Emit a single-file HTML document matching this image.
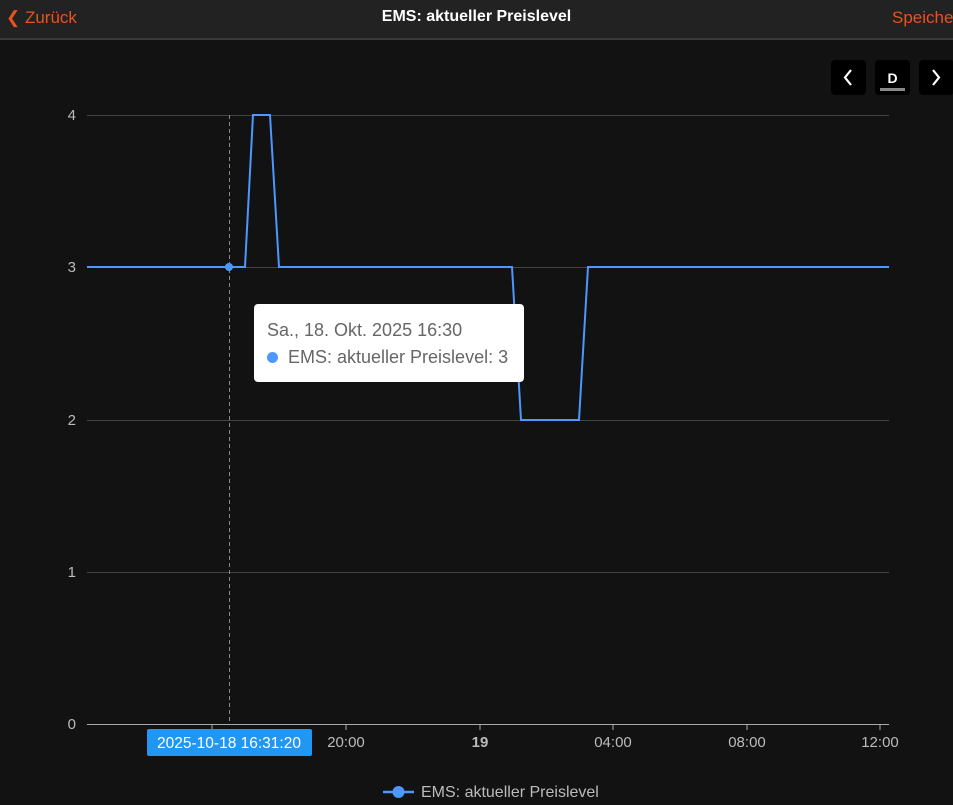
<!DOCTYPE html>
<html><head><meta charset="utf-8"><style>
body{margin:0;width:953px;height:805px;background:#121212;font-family:"Liberation Sans",sans-serif;overflow:hidden;position:relative}
.hdr{position:absolute;left:0;top:0;width:953px;height:38px;background:#222;border-bottom:2px solid #3a3a3a}
.hdr .b{position:absolute;top:8px;color:#e8521e;font-size:17px}
.hdr .t{position:absolute;top:8px;left:0;width:953px;text-align:center;color:#fff;font-size:16px;font-weight:bold}
.btn{position:absolute;top:60px;width:35px;height:35px;background:#000;border-radius:4px;color:#fff;text-align:center}
.tip{position:absolute;left:254px;top:304px;width:270px;height:78px;background:#fff;border-radius:4px;font-size:18px;color:#666}
</style></head><body>
<div class="hdr"><span class="b" style="left:6px">&#10094; Zurück</span><div class="t">EMS: aktueller Preislevel</div><span class="b" style="left:892px">Speiche</span></div>
<div class="btn" style="left:831px"><svg width="35" height="35"><path d="M20 10 L14 17.5 L20 25" stroke="#fff" stroke-width="2.2" fill="none"/></svg></div>
<div class="btn" style="left:875px;font-weight:bold;font-size:14px;line-height:36px">D<div style="position:absolute;left:5px;top:28px;width:25px;height:3px;background:#888"></div></div>
<div class="btn" style="left:919px"><svg width="35" height="35"><path d="M14 10 L20 17.5 L14 25" stroke="#fff" stroke-width="2.2" fill="none"/></svg></div>
<svg width="953" height="805" style="position:absolute;left:0;top:0" font-family="Liberation Sans" font-size="15">
<g stroke="#444" stroke-width="1"><line x1="87" x2="889" y1="115.5" y2="115.5"/><line x1="87" x2="889" y1="267.5" y2="267.5"/><line x1="87" x2="889" y1="420.5" y2="420.5"/><line x1="87" x2="889" y1="572.5" y2="572.5"/></g>
<line x1="87" x2="889" y1="724.5" y2="724.5" stroke="#aaa"/>
<g stroke="#aaa"><line x1="212" x2="212" y1="724" y2="730"/><line x1="346" x2="346" y1="724" y2="730"/><line x1="480" x2="480" y1="724" y2="730"/><line x1="613" x2="613" y1="724" y2="730"/><line x1="747" x2="747" y1="724" y2="730"/><line x1="880" x2="880" y1="724" y2="730"/></g>
<g fill="#bbb" text-anchor="end"><text x="76" y="120">4</text><text x="76" y="272">3</text><text x="76" y="425">2</text><text x="76" y="577">1</text><text x="76" y="729">0</text></g>
<g fill="#bbb" text-anchor="middle"><text x="346" y="747">20:00</text><text x="480" y="747" font-weight="bold">19</text><text x="613" y="747">04:00</text><text x="747" y="747">08:00</text><text x="880" y="747">12:00</text></g>
<line x1="229.5" x2="229.5" y1="115" y2="724" stroke="#888" stroke-dasharray="4,3"/>
<polyline points="87,267 245,267 253,115 270,115 279,267 512,267 521,420 579,420 588,267 889,267" fill="none" stroke="#4d97ff" stroke-width="2"/>
<circle cx="229" cy="267" r="4" fill="#4d97ff"/>
<rect x="147" y="729" width="165" height="27" rx="2" fill="#2196f3"/>
<text x="229" y="748" fill="#fff" text-anchor="middle" font-size="15.5">2025-10-18 16:31:20</text>
<line x1="383" x2="414" y1="792" y2="792" stroke="#4d97ff" stroke-width="2.5"/><circle cx="398.5" cy="792" r="6" fill="#4d97ff"/>
<text x="421" y="797" fill="#bbb" font-size="16">EMS: aktueller Preislevel</text>
</svg>
<div class="tip"><div style="position:absolute;left:13px;top:16px">Sa., 18. Okt. 2025 16:30</div>
<div style="position:absolute;left:13px;top:43px"><span style="display:inline-block;width:11px;height:11px;border-radius:50%;background:#4d97ff;margin-right:10px"></span>EMS: aktueller Preislevel: 3</div></div>
</body></html>
